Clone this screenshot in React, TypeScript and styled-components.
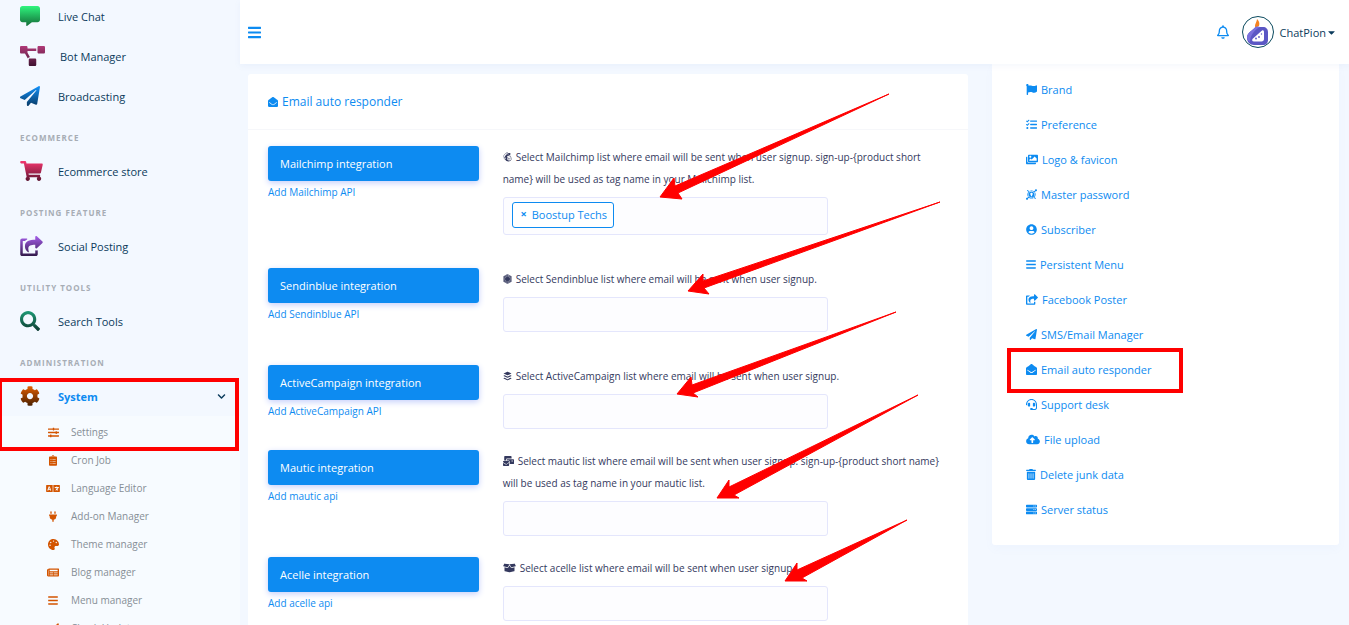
import React from 'react';
import styled, { createGlobalStyle } from 'styled-components';
import type { IconType } from 'react-icons';
import {
  FaCommentAlt, FaProjectDiagram, FaPaperPlane, FaShoppingCart, FaShareSquare, FaSearch, FaCog,
  FaSlidersH, FaClipboardList, FaLanguage, FaPlug, FaPalette, FaNewspaper, FaBars, FaLeaf,
  FaFlag, FaTasks, FaImages, FaKeycdn, FaUserCircle, FaEnvelopeOpen, FaHeadset,
  FaCloudUploadAlt, FaTrashAlt, FaServer, FaMailchimp, FaBuffer, FaMailBulk, FaBoxOpen,
  FaChevronDown, FaCaretDown, FaRegBell, FaFirstOrder,
} from 'react-icons/fa';

const blue = '#0d8bf1';
const red = '#ff0000';

const GlobalStyle = createGlobalStyle`
  * { box-sizing: border-box; }
  body {
    margin: 0;
    background: #f3f8ff;
    font-family: "Open Sans", "Noto Sans", sans-serif;
    font-size: 11px;
    overflow: hidden;
  }
  a { color: inherit; text-decoration: none; }
  ul { list-style: none; margin: 0; padding: 0; }
  button, input { font: inherit; }
`;

const Shell = styled.div`
  display: grid;
  grid-template-columns: 240px minmax(0, 1fr);
  height: 100vh;
  overflow: hidden;
`;

const GlyphBox = styled.span<{ $width: number; $height: number }>`
  display: inline-flex;
  flex: none;
  vertical-align: -1px;
  svg {
    width: ${p => p.$width}px;
    height: ${p => p.$height}px;
  }
`;

const Sidebar = styled.nav`
  background: #f3f8ff;
  overflow: hidden;
  display: flex;
  flex-direction: column;
  margin-top: -4px;
`;

const SideLink = styled.a<{ $active?: boolean }>`
  display: flex;
  align-items: center;
  flex: none;
  height: 40px;
  padding: 0 14px 0 20px;
  gap: 15px;
  color: ${p => (p.$active ? blue : '#0b3b5c')};
  font-weight: ${p => (p.$active ? 700 : 400)};
  > svg { margin-left: auto; color: #0b3b5c; }
`;

const SideIcon = styled.span<{ $tone: string }>`
  display: flex;
  min-width: 23px;
  path { fill: url(#${p => p.$tone}); }
`;

const SideHeading = styled.h2`
  flex: none;
  margin: 0;
  height: 35px;
  padding: 14px 20px 0;
  line-height: 16px;
  font-size: 8px;
  font-weight: 700;
  letter-spacing: 1px;
  text-transform: uppercase;
  color: #a7adb5;
`;

const SystemGroup = styled.div`
  position: relative;
`;

const SubMenu = styled.ul`
  background: #f7fbff;
  padding: 2px 0;
`;

const SubLink = styled.a`
  display: flex;
  align-items: center;
  height: 28px;
  padding-left: 46px;
  font-size: 10px;
  color: #868e96;
`;

const SubIcon = styled.span`
  display: flex;
  justify-content: center;
  width: 14px;
  margin-right: 11px;
  color: #d35400;
`;

const SystemMark = styled.div`
  position: absolute;
  left: -2px;
  top: 2px;
  width: 241px;
  height: 73px;
  border: 4px solid ${red};
`;

const Main = styled.div`
  display: flex;
  flex-direction: column;
  min-width: 0;
`;

const TopBar = styled.header`
  flex: none;
  display: flex;
  align-items: center;
  height: 64px;
  padding: 0 14px 0 8px;
  background: #fff;
  box-shadow: 0 2px 6px rgba(130, 150, 220, 0.08);
  z-index: 1;
`;

const IconButton = styled.button`
  display: flex;
  padding: 0;
  border: 0;
  background: none;
  color: ${blue};
`;

const Account = styled.button`
  display: flex;
  align-items: center;
  margin-left: 13px;
  padding: 0;
  border: 0;
  background: none;
  color: #0b3b5c;
`;

const AccountName = styled.span`
  margin: 0 2px 0 6px;
`;

const Spacer = styled.div`
  flex: 1;
`;

const Columns = styled.div`
  display: grid;
  grid-template-columns: minmax(0, 720fr) minmax(0, 347fr);
  column-gap: 24px;
  align-items: start;
  padding: 0 10px 0 8px;
`;

const Card = styled.section`
  position: relative;
  margin-top: 10px;
  background: #fff;
  border-radius: 3px;
`;

const CardHeader = styled.h1`
  display: flex;
  align-items: center;
  gap: 4px;
  margin: 0;
  height: 56px;
  padding: 0 20px;
  border-bottom: 1px solid #f6f7fa;
  font-size: 12px;
  font-weight: 400;
  color: ${blue};
`;

const CardBody = styled.form`
  padding: 16px 20px;
`;

const Row = styled.div<{ $space: number }>`
  display: grid;
  grid-template-columns: repeat(12, minmax(0, 1fr));
  column-gap: 24px;
  margin-bottom: ${p => p.$space}px;
`;

const Provider = styled.div`
  grid-column: span 4;
  display: flex;
  flex-direction: column;
`;

const ProviderButton = styled.button`
  height: 35px;
  padding: 0 12px 1px;
  border: 0;
  border-radius: 3px;
  background: ${blue};
  color: #fff;
  text-align: left;
  box-shadow: 0 2px 6px #c5cffb;
`;

const ApiLink = styled.a`
  align-self: flex-start;
  margin-top: 3px;
  line-height: 16px;
  font-size: 10px;
  color: ${blue};
`;

const Field = styled.div`
  grid-column: span 8;
  display: flex;
  flex-direction: column;
  gap: 7px;
`;

const FieldLabel = styled.label`
  line-height: 22px;
  font-size: 10px;
  color: #34395e;
  > span { margin-right: 4px; }
`;

const PickBox = styled.div`
  display: flex;
  align-items: flex-start;
  width: 325px;
  max-width: 100%;
  min-height: 35px;
  padding: 4px 8px;
  border: 1px solid #e4e6fc;
  border-radius: 3px;
  background: #fdfdff;
`;

const PickInput = styled.input`
  flex: 1;
  min-width: 0;
  height: 25px;
  border: 0;
  padding: 0 4px;
  outline: 0;
  background: transparent;
`;

const Chip = styled.span`
  display: flex;
  align-items: center;
  gap: 4px;
  height: 26px;
  margin-bottom: 2px;
  padding: 0 6px 2px 7px;
  border: 1px solid ${blue};
  border-radius: 3px;
  background: #fff;
  color: ${blue};
`;

const ChipRemove = styled.button`
  width: 8px;
  padding: 0;
  border: 0;
  background: none;
  color: inherit;
  font-weight: 700;
  line-height: 12px;
`;

const Panel = styled.aside`
  padding: 8px 34px 18px;
  background: #fff;
  border-radius: 0 0 3px 3px;
  box-shadow: 0 4px 8px rgba(130, 150, 220, 0.04);
`;

const PanelItem = styled.li`
  position: relative;
`;

const PanelLink = styled.a`
  display: flex;
  align-items: center;
  gap: 4px;
  height: 35px;
  color: ${blue};
`;

const PanelMark = styled.div`
  position: absolute;
  left: -19px;
  top: -4px;
  width: 176px;
  height: 45px;
  border: 4px solid ${red};
`;

const Arrows = styled.svg`
  position: absolute;
  left: 0;
  top: 0;
  overflow: visible;
  pointer-events: none;
  fill: ${red};
  stroke: ${red};
`;

// Icons are drawn on a 512-unit tall grid; `units` is the width on that grid.
function Glyph({ icon: Icon, size, units = 512 }: { icon: IconType; size: number; units?: number }) {
  return (
    <GlyphBox $height={size} $width={Math.round((size * units) / 512)}>
      <Icon />
    </GlyphBox>
  );
}

type Item = { text: string; icon: IconType; units?: number };

const tones = [
  ['green', '#2ff57d', '#146c38'],
  ['plum', '#b03a78', '#3f1230'],
  ['azure', '#1292fb', '#083a66'],
  ['rose', '#f5366f', '#5c1430'],
  ['violet', '#a55eea', '#32194a'],
  ['teal', '#1e9b76', '#0d3a30'],
  ['orange', '#e05d00', '#4a1f00'],
];

const sideGroups: { heading: string; items: (Item & { tone: string })[] }[] = [
  { heading: '', items: [
    { text: 'Live Chat', icon: FaCommentAlt, tone: 'green' },
    { text: 'Bot Manager', icon: FaProjectDiagram, units: 640, tone: 'plum' },
    { text: 'Broadcasting', icon: FaPaperPlane, tone: 'azure' },
  ] },
  { heading: 'Ecommerce', items: [{ text: 'Ecommerce store', icon: FaShoppingCart, units: 576, tone: 'rose' }] },
  { heading: 'Posting feature', items: [{ text: 'Social Posting', icon: FaShareSquare, units: 576, tone: 'violet' }] },
  { heading: 'Utility tools', items: [{ text: 'Search Tools', icon: FaSearch, tone: 'teal' }] },
];

const subItems: Item[] = [
  { text: 'Settings', icon: FaSlidersH },
  { text: 'Cron Job', icon: FaClipboardList, units: 384 },
  { text: 'Language Editor', icon: FaLanguage, units: 640 },
  { text: 'Add-on Manager', icon: FaPlug, units: 384 },
  { text: 'Theme manager', icon: FaPalette },
  { text: 'Blog manager', icon: FaNewspaper, units: 576 },
  { text: 'Menu manager', icon: FaBars, units: 448 },
  { text: 'Check Update', icon: FaLeaf, units: 576 },
];

const panelItems: (Item & { marked?: boolean })[] = [
  { text: 'Brand', icon: FaFlag },
  { text: 'Preference', icon: FaTasks },
  { text: 'Logo & favicon', icon: FaImages, units: 576 },
  { text: 'Master password', icon: FaKeycdn },
  { text: 'Subscriber', icon: FaUserCircle, units: 496 },
  { text: 'Persistent Menu', icon: FaBars, units: 448 },
  { text: 'Facebook Poster', icon: FaShareSquare, units: 576 },
  { text: 'SMS/Email Manager', icon: FaPaperPlane },
  { text: 'Email auto responder', icon: FaEnvelopeOpen, marked: true },
  { text: 'Support desk', icon: FaHeadset },
  { text: 'File upload', icon: FaCloudUploadAlt, units: 640 },
  { text: 'Delete junk data', icon: FaTrashAlt, units: 448 },
  { text: 'Server status', icon: FaServer },
];

const providers = [
  { id: 'mailchimp', name: 'Mailchimp', api: 'Add Mailchimp API', icon: FaMailchimp, units: 448, space: 33, picked: 'Boostup Techs',
    label: 'Select Mailchimp list where email will be sent when user signup. sign-up-{product short name} will be used as tag name in your Mailchimp list.' },
  { id: 'sendinblue', name: 'Sendinblue', api: 'Add Sendinblue API', icon: FaFirstOrder, units: 448, space: 33,
    label: 'Select Sendinblue list where email will be sent when user signup.' },
  { id: 'activecampaign', name: 'ActiveCampaign', api: 'Add ActiveCampaign API', icon: FaBuffer, units: 448, space: 21,
    label: 'Select ActiveCampaign list where email will be sent when user signup.' },
  { id: 'mautic', name: 'Mautic', api: 'Add mautic api', icon: FaMailBulk, units: 576, space: 21,
    label: 'Select mautic list where email will be sent when user signup. sign-up-{product short name} will be used as tag name in your mautic list.' },
  { id: 'acelle', name: 'Acelle', api: 'Add acelle api', icon: FaBoxOpen, units: 640, space: 21,
    label: 'Select acelle list where email will be sent when user signup.' },
];

const arrowShapes = [
  '641,20 427,112 426,104 412,123 434,125 430,119',
  '692,128 455,207 455,200 440,217 461,220 456,214',
  '648,238 444,311 443,303 429,320 450,323 445,319',
  '670,321 481,413 481,406 469,424 491,424 486,421',
  '659,446 549,496 549,489 537,507 559,507 554,504',
];

function Avatar() {
  return (
    <svg width="32" height="32" viewBox="0 0 32 32" aria-hidden="true">
      <circle cx="16" cy="16" r="15.5" fill="#fff" stroke="#0b4a5e" />
      <path d="M14 10c-2 4-9 6-9 12 0 4 3 7 7 7h9c3 0 5-2 5-5v-8c0-3-2-5-5-5h-4z" fill="#5b57c4" />
      <path d="M14 10c-2 4-9 6-9 11 0 2 1 4 3 5 0-6 4-12 10-15z" fill="#7a70dd" />
      <path d="M15 3c2 2 3 4 2 7l-4 1c-.5-3 2-5 2-8z" fill="#f58220" />
      <path d="M20 14.500c1.500-.5 2 .5 2 2v6.500c0 1.500-1 2.500-2.500 2.500h-7.500c-2 0-2.500-1.500-1-3z" fill="#fff" />
      <g fill="#5b57c4"><circle cx="14" cy="22.500" r=".9" /><circle cx="17" cy="21" r=".9" /><circle cx="19.500" cy="18" r=".7" /></g>
    </svg>
  );
}

export default function App() {
  return (
    <Shell>
      <GlobalStyle />
      <svg width="0" height="0" style={{ position: 'absolute' }} aria-hidden="true">
        <defs>
          {tones.map(([id, from, to]) => (
            <linearGradient key={id} id={id} x1="0" y1="0" x2="0" y2="1">
              <stop offset="0" stopColor={from} />
              <stop offset="1" stopColor={to} />
            </linearGradient>
          ))}
        </defs>
      </svg>

      <Sidebar>
        {sideGroups.map(group => (
          <React.Fragment key={group.heading}>
            {group.heading && <SideHeading>{group.heading}</SideHeading>}
            {group.items.map(({ text, icon, units, tone }) => (
              <SideLink href="#" key={text}>
                <SideIcon $tone={tone}><Glyph icon={icon} size={20} units={units} /></SideIcon>
                {text}
              </SideLink>
            ))}
          </React.Fragment>
        ))}
        <SideHeading>Administration</SideHeading>
        <SystemGroup>
          <SideLink href="#" $active>
            <SideIcon $tone="orange"><Glyph icon={FaCog} size={20} /></SideIcon>
            System
            <FaChevronDown size={9} />
          </SideLink>
          <SubMenu>
            {subItems.map(({ text, icon, units }) => (
              <li key={text}>
                <SubLink href="#">
                  <SubIcon><Glyph icon={icon} size={11} units={units} /></SubIcon>
                  {text}
                </SubLink>
              </li>
            ))}
          </SubMenu>
          <SystemMark />
        </SystemGroup>
      </Sidebar>

      <Main>
        <TopBar>
          <IconButton aria-label="Toggle sidebar"><Glyph icon={FaBars} size={15} units={448} /></IconButton>
          <Spacer />
          <IconButton aria-label="Notifications"><Glyph icon={FaRegBell} size={14} units={448} /></IconButton>
          <Account>
            <Avatar />
            <AccountName>ChatPion</AccountName>
            <Glyph icon={FaCaretDown} size={11} units={320} />
          </Account>
        </TopBar>

        <Columns>
          <Card>
            <CardHeader><Glyph icon={FaEnvelopeOpen} size={10} />Email auto responder</CardHeader>
            <CardBody>
              {providers.map(({ id, name, api, icon, units, label, space, picked }) => (
                <Row key={id} $space={space}>
                  <Provider>
                    <ProviderButton type="button">{name} integration</ProviderButton>
                    <ApiLink href="#">{api}</ApiLink>
                  </Provider>
                  <Field>
                    <FieldLabel htmlFor={id}><Glyph icon={icon} size={10} units={units} />{label}</FieldLabel>
                    <PickBox>
                      {picked && (
                        <Chip><ChipRemove type="button" aria-label={'Remove ' + picked}>×</ChipRemove>{picked}</Chip>
                      )}
                      <PickInput id={id} type="text" />
                    </PickBox>
                  </Field>
                </Row>
              ))}
            </CardBody>
            <Arrows width="720" height="552" aria-hidden="true">
              {arrowShapes.map(points => <polygon key={points} points={points} />)}
            </Arrows>
          </Card>

          <Panel>
            <ul>
              {panelItems.map(({ text, icon, units, marked }) => (
                <PanelItem key={text}>
                  <PanelLink href="#"><Glyph icon={icon} size={11} units={units} />{text}</PanelLink>
                  {marked && <PanelMark />}
                </PanelItem>
              ))}
            </ul>
          </Panel>
        </Columns>
      </Main>
    </Shell>
  );
}
